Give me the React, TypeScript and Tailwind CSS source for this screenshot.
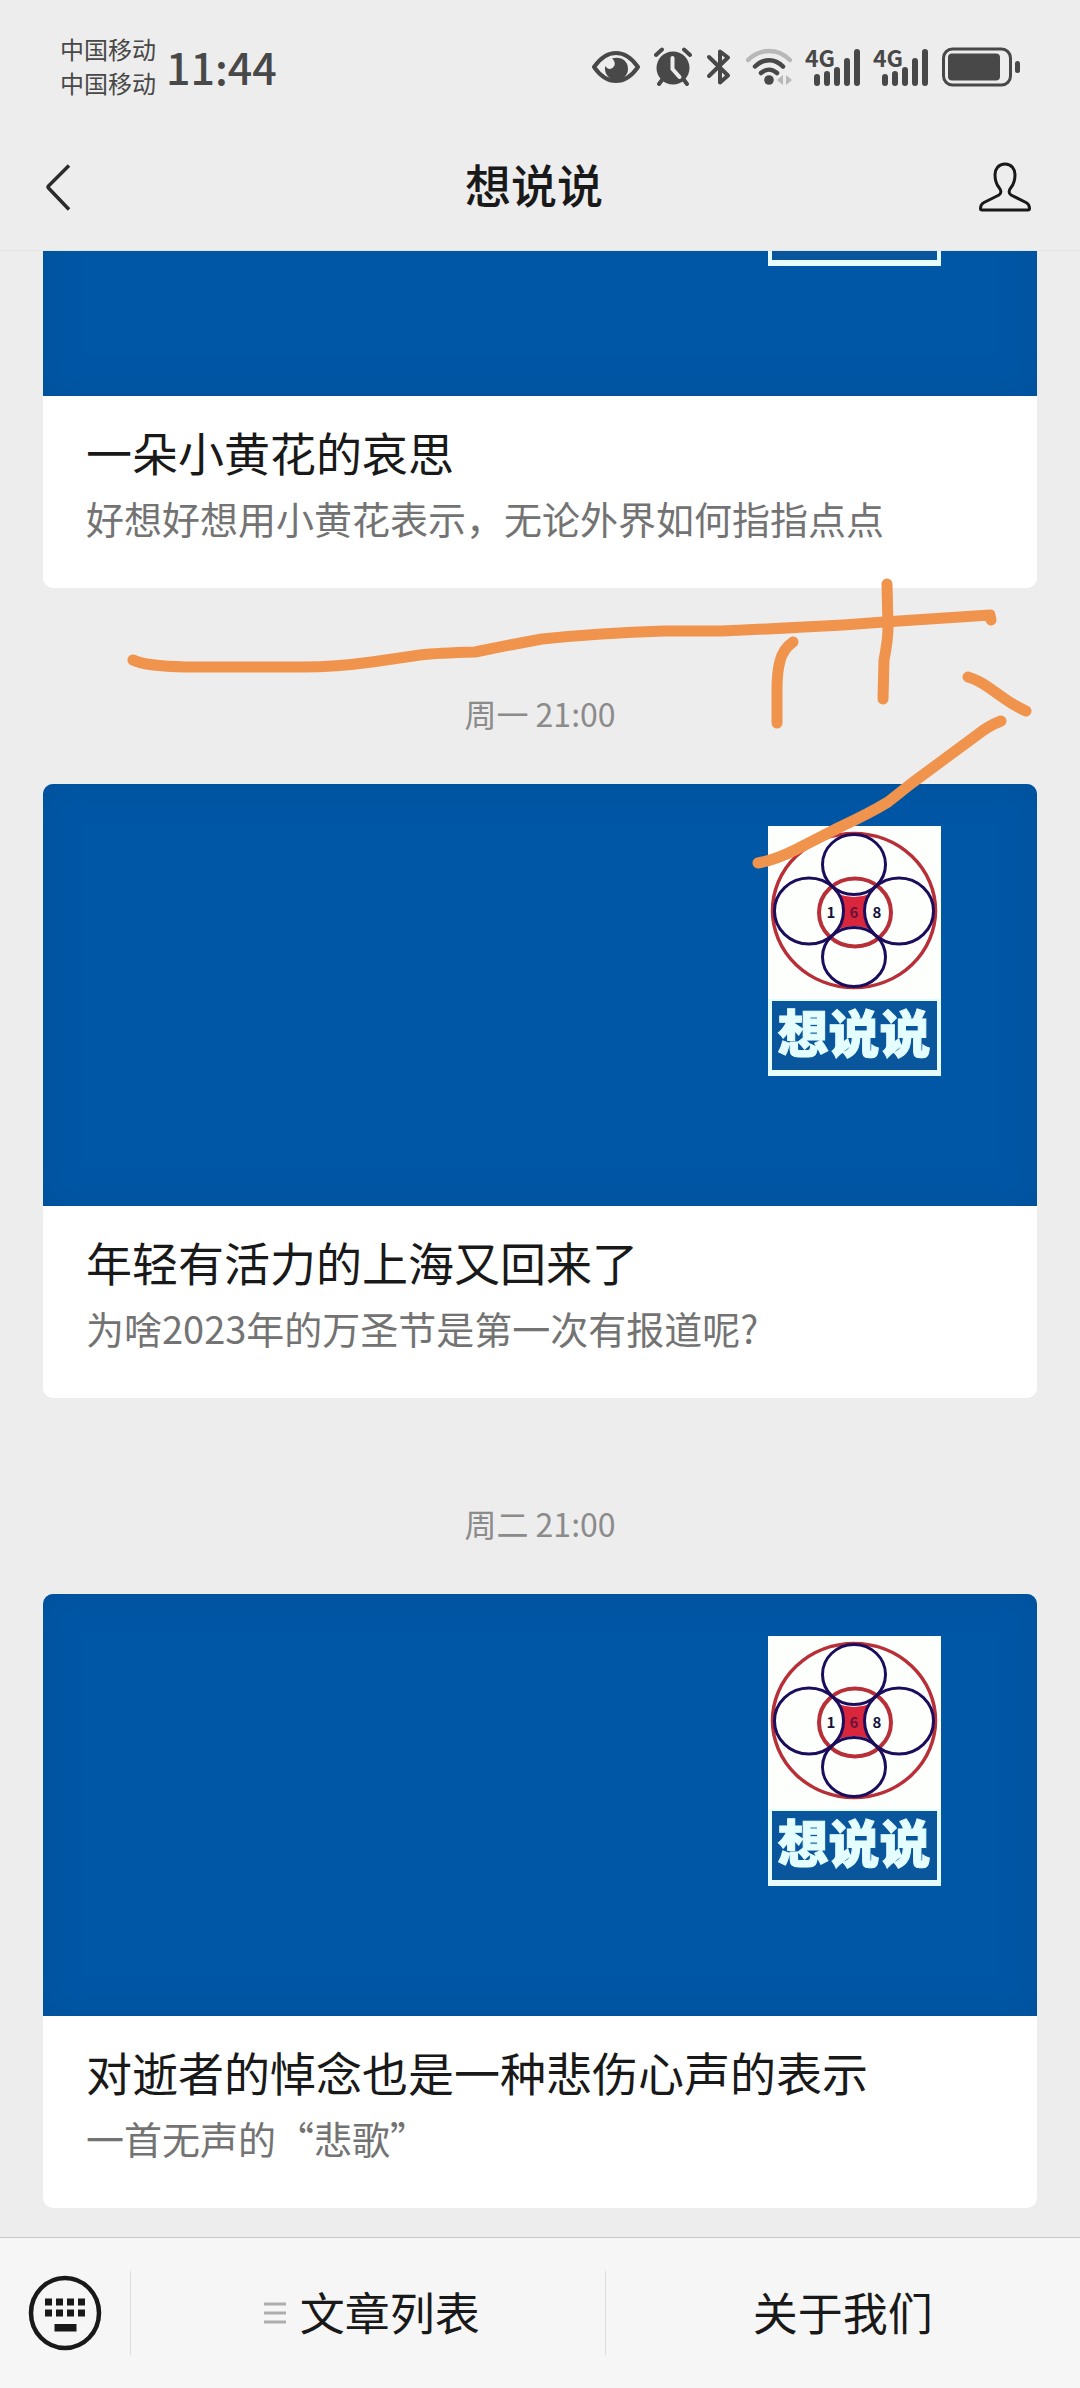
import React from "react";

type Post = { id: string; time?: string; title: string; summary: string };

const posts: Post[] = [
  { id: "p1", title: "一朵小黄花的哀思", summary: "好想好想用小黄花表示，无论外界如何指指点点" },
  { id: "p2", time: "周一 21:00", title: "年轻有活力的上海又回来了", summary: "为啥2023年的万圣节是第一次有报道呢?" },
  { id: "p3", time: "周二 21:00", title: "对逝者的悼念也是一种悲伤心声的表示", summary: "一首无声的“悲歌”" },
];

function EyeIcon() {
  return (
    <svg width="48" height="40" viewBox="0 0 48 40" fill="none" aria-hidden="true">
      <path d="M2 20C9 10 16 6 24 6s15 4 22 14c-7 10-14 14-22 14S9 30 2 20Z" stroke="#484848" strokeWidth="4" strokeLinejoin="round" />
      <path d="M20 11.500c9-2.500 16 2.500 16 10.500 0 6-5 11-11 11-7 0-12-5-12-11 0-1 0-2 .5-3 1.500 3 4 3.500 6 2.500 4-2 4.500-6.500.5-10Z" fill="#484848" />
    </svg>
  );
}

function AlarmIcon() {
  return (
    <svg width="38" height="40" viewBox="0 0 38 40" fill="none" aria-hidden="true">
      <circle cx="19" cy="21" r="16.500" fill="#484848" />
      <path d="M2 8l6-5.500M36 8l-6-5.500M8 33l-3 4M30 33l3 4" stroke="#484848" strokeWidth="4" strokeLinecap="round" />
      <path d="M18.500 11v11l7 8" stroke="#ededed" strokeWidth="4" strokeLinecap="round" />
    </svg>
  );
}

function BluetoothIcon() {
  return (
    <svg width="26" height="40" viewBox="0 0 26 40" fill="none" aria-hidden="true">
      <path d="M3 10l19 18.500-8 7V4.500l8 6L3 29" stroke="#484848" strokeWidth="4" strokeLinecap="round" strokeLinejoin="round" />
    </svg>
  );
}

function WifiIcon() {
  return (
    <svg width="46" height="40" viewBox="0 0 46 40" fill="none" strokeLinecap="round" aria-hidden="true">
      <path d="M2 13c12-12 30-12 42 0" stroke="#b8b8b8" strokeWidth="4.500" />
      <path d="M9 19.500c8.500-8.500 20-8.500 28 0" stroke="#484848" strokeWidth="4.500" />
      <path d="M15 26c5-4.500 11-4.500 16 0" stroke="#484848" strokeWidth="4.500" />
      <circle cx="23" cy="33" r="4.800" fill="#484848" />
      <path d="M37 28v10l-6-5zM40 28v10l6-5z" fill="#b8b8b8" />
    </svg>
  );
}

function SignalIcon() {
  return (
    <svg width="54" height="40" viewBox="0 0 54 40" fill="none" className="overflow-visible" aria-label="4G">
      <text x="-1" y="20" fontSize="23" fontWeight="700" fill="#484848" fontFamily="'Noto Sans CJK SC', sans-serif">4G</text>
      <path d="M11 30v6M21 27v9M31 23v13M41 14v22M51 5v31" stroke="#484848" strokeWidth="6" strokeLinecap="round" />
    </svg>
  );
}

function BatteryIcon() {
  return (
    <svg width="78" height="40" viewBox="0 0 78 40" fill="none" aria-hidden="true">
      <rect x="1.500" y="2" width="67" height="36" rx="9" stroke="#484848" strokeWidth="3" />
      <rect x="6" y="6.500" width="52" height="27" rx="4" fill="#484848" />
      <rect x="73" y="14" width="5" height="12" rx="2.500" fill="#484848" />
    </svg>
  );
}

function StatusBar() {
  return (
    <div className="flex h-[132px] items-center justify-between pl-[60px] pr-[60px] text-[#484848]">
      <div className="flex items-center gap-[10px]">
        <div className="flex flex-col text-[24px] leading-[34px]">
          <span>中国移动</span>
          <span>中国移动</span>
        </div>
        <span className="text-[43px] font-medium leading-[60px]">11:44</span>
      </div>
      <div className="flex items-center gap-[14px] pt-0.5">
        <EyeIcon />
        <AlarmIcon />
        <BluetoothIcon />
        <WifiIcon />
        <SignalIcon />
        <SignalIcon />
        <BatteryIcon />
      </div>
    </div>
  );
}

function TitleBar() {
  return (
    <div className="grid h-[118px] grid-cols-3 items-center pb-2 pl-9 pr-12">
      <button type="button" aria-label="返回" className="justify-self-start pl-2">
        <svg width="28" height="48" viewBox="0 0 28 48" fill="none" stroke="#2b2b2b" strokeWidth="3.500">
          <path d="M25 2.500L4.500 23q-1 1 0 2L25 46.500" />
        </svg>
      </button>
      <h1 className="pb-2 text-center text-[46px] font-medium leading-[60px] text-[#191919]">想说说</h1>
      <button type="button" aria-label="公众号主页" className="justify-self-end">
        <svg width="54" height="52" viewBox="4 0 54 52" fill="none" stroke="#191919" strokeWidth="3" strokeLinejoin="round">
          <path d="M31 3c-6.500 0-10 5-10 10.500 0 6 1 9.500 4 13 2.500 3 2.500 6 0 7.500L10 41.500C7 43 6.500 45 6.500 47.500q0 1.500 1.500 1.500h46q1.500 0 1.500-1.500c0-2.500-.5-4.500-3.500-6L37 34c-2.500-1.500-2.500-4.500 0-7.500 3-3.500 4-7 4-13C41 8 37.500 3 31 3Z" />
        </svg>
      </button>
    </div>
  );
}

function Logo() {
  return (
    <svg viewBox="0 0 173 250" className="h-auto w-full" fill="none" fontFamily="'Noto Sans CJK SC', sans-serif" aria-label="想说说">
      <rect width="173" height="250" fill="#fdfffd" />
      <rect y="173" width="173" height="77" fill="#e6fcff" />
      <rect x="4" y="175" width="165" height="69" fill="#0a569d" />
      <path d="M70 68q16 6 32 0-10 17-1 35-15-6-30 0 9-18-1-35Z" fill="#d9263c" />
      <ellipse cx="86" cy="84.500" rx="81.500" ry="77" stroke="#b82f38" strokeWidth="3.500" />
      <ellipse cx="87" cy="86.500" rx="36" ry="34" stroke="#b82f38" strokeWidth="4" />
      <g stroke="#1c0d5c" strokeWidth="3">
        <ellipse cx="86" cy="38.500" rx="31.500" ry="30" />
        <ellipse cx="86" cy="131" rx="31.500" ry="29.500" />
        <ellipse cx="41" cy="85" rx="34.500" ry="33" />
        <ellipse cx="131" cy="85" rx="34.500" ry="33" />
      </g>
      <g fontSize="15" fontWeight="700" textAnchor="middle" fill="#14143c">
        <text x="63" y="92">1</text>
        <text x="86" y="92" fill="#6b1238">6</text>
        <text x="109" y="92">8</text>
      </g>
      <text x="86" y="227" fontSize="51" fontWeight="900" textAnchor="middle" fill="#e4fdff" stroke="#e4fdff" strokeWidth="1">想说说</text>
    </svg>
  );
}

function PenMarks() {
  return (
    <svg
      viewBox="0 560 1080 340"
      className="pointer-events-none absolute inset-x-0 -top-7 z-10 w-full"
      fill="none"
      stroke="#f0934d"
      strokeWidth="11"
      strokeLinecap="round"
      strokeLinejoin="round"
      aria-hidden="true"
    >
      <path d="M133 660Q145 666 186 667H303Q335 667 372 662L420 655Q437 653 475 652L510 645 542 639Q600 633 664 631H722Q790 628 843 625L884 622 990 615 991 620" />
      <path d="M793 642Q783 649 780 661 777 672 777 690V723" />
      <path d="M887 584L888 627Q888 640 884 660L883 699" />
      <path d="M968 677Q978 680 988 687L1005 699 Q1015 706 1026 711" />
      <path d="M1001 721Q988 726 977 735L912 783 888 802Q870 813 840 827L795 850Q775 860 758 863" />
    </svg>
  );
}

function PostItem({ post, marked }: { post: Post; marked: boolean }) {
  return (
    <section className="relative shrink-0">
      {post.time && (
        <p className="px-4 pb-[47px] pt-[101px] text-center text-[32px] leading-[48px] text-[#8b8b8b]">{post.time}</p>
      )}
      <a href="#" className="mx-[43px] block overflow-hidden rounded-[10px] bg-white">
        <div className="flex h-[422px] items-start justify-end bg-[#0057a5] pr-24 pt-[42px] shadow-[inset_0_0_32px_#00509a]">
          <div className="w-[173px]">
            <Logo />
          </div>
        </div>
        <div className="flex h-[192px] flex-col px-[43px] pt-[22px]">
          <h2 className="text-[46px] leading-[66px] text-[#191919]">{post.title}</h2>
          <p className="text-[38px] leading-[68px] text-[#737373]">{post.summary}</p>
        </div>
      </a>
      {marked && <PenMarks />}
    </section>
  );
}

function BottomBar() {
  return (
    <nav className="flex h-[151px] shrink-0 items-center border-t border-[#c8c8c8] bg-[#f6f6f6] text-[45px] leading-[64px] text-[#191919]">
      <button type="button" aria-label="键盘" className="flex h-[84px] w-[131px] items-center justify-center border-r border-[#dcdcdc]">
        <svg width="74" height="76" viewBox="0 0 74 76" fill="#191919">
          <ellipse cx="37" cy="38" rx="34" ry="35" fill="none" stroke="#191919" strokeWidth="4.500" />
          <path d="M17 23.500h7v7h-7zM28 23.500h7v7h-7zM39 23.500h7v7h-7zM50 23.500h7v7h-7zM17 34.500h7v7h-7zM28 34.500h7v7h-7zM39 34.500h7v7h-7zM50 34.500h7v7h-7zM26.500 49h22v7.500h-22z" />
        </svg>
      </button>
      <div className="grid flex-1 grid-cols-2">
        <button type="button" className="flex h-[84px] items-center justify-center gap-3.5 border-r border-[#dcdcdc] pl-2">
          <svg width="22" height="22" viewBox="0 0 22 22" stroke="#adadad" strokeWidth="3" aria-hidden="true">
            <path d="M0 2h22M0 11h22M0 20h22" />
          </svg>
          <span className="pb-0.5">文章列表</span>
        </button>
        <button type="button" className="flex h-[84px] items-center justify-center pb-0.5">关于我们</button>
      </div>
    </nav>
  );
}

export default function App() {
  return (
    <div lang="zh-CN" className="flex h-screen flex-col bg-[#ededed] font-['Noto_Sans_CJK_SC',sans-serif]">
      <header className="shrink-0 border-b border-[#e4e4e4]">
        <StatusBar />
        <TitleBar />
      </header>
      <main className="flex min-h-0 flex-1 flex-col justify-end overflow-hidden pb-[29px]">
        {posts.map((post) => (
          <PostItem key={post.id} post={post} marked={post.id === "p2"} />
        ))}
      </main>
      <BottomBar />
    </div>
  );
}
